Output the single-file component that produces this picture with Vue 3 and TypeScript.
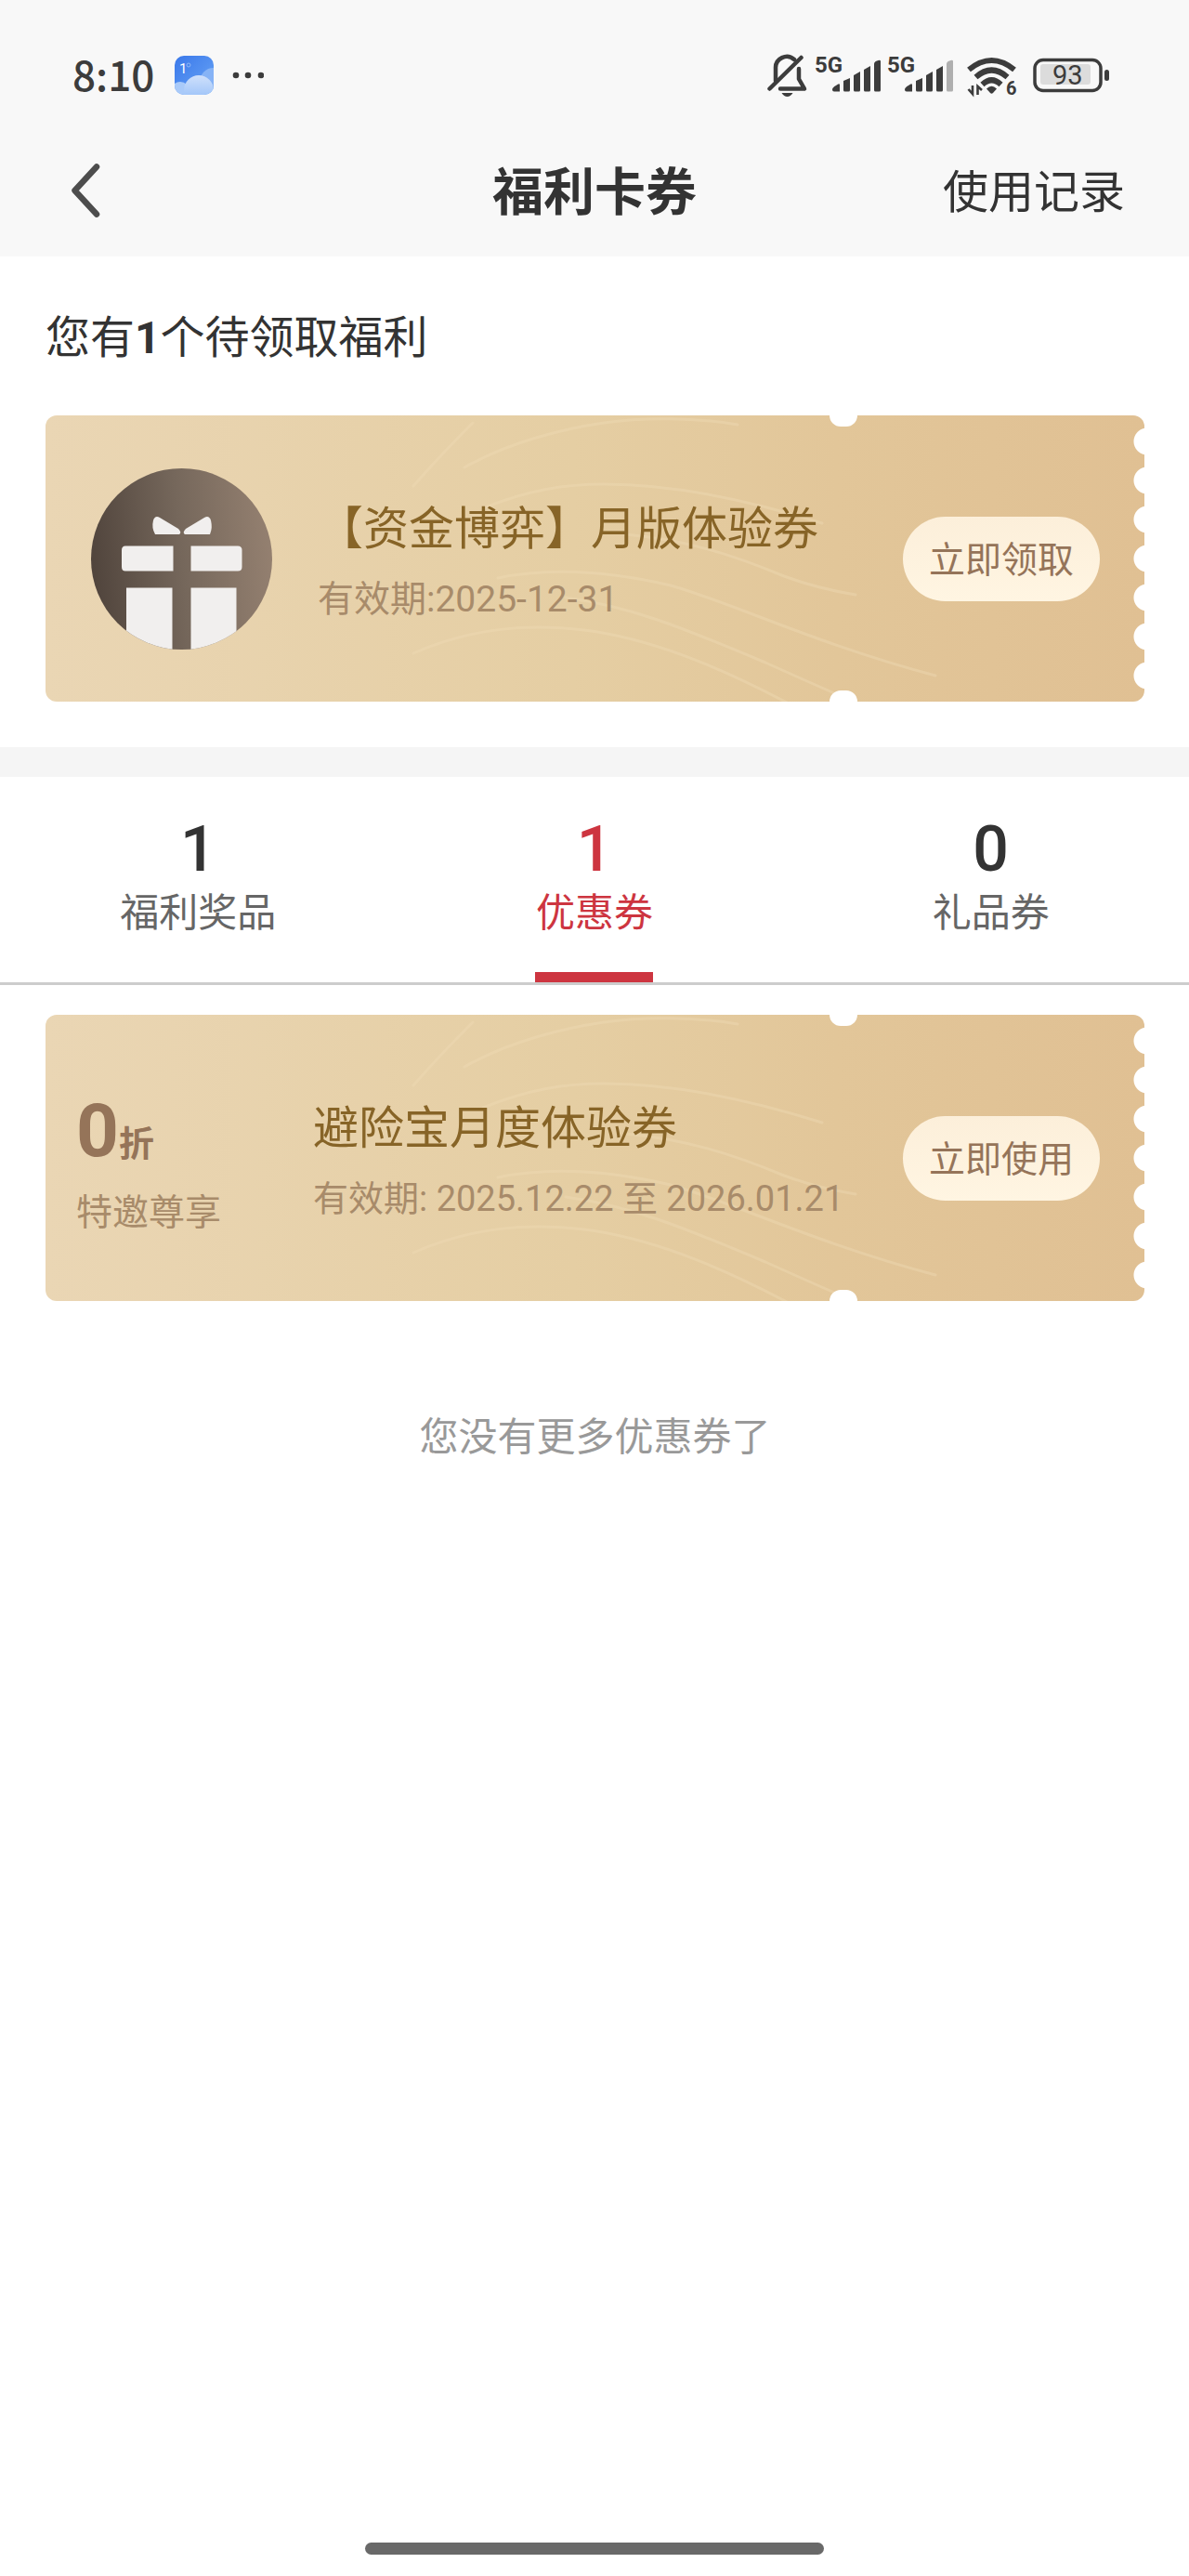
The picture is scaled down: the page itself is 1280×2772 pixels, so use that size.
<script setup lang="ts">
import { computed, ref } from 'vue'

interface Tab {
  id: string
  label: string
  count: number
}

const tabs: Tab[] = [
  { id: 'prize', label: '福利奖品', count: 1 },
  { id: 'coupon', label: '优惠券', count: 1 },
  { id: 'gift', label: '礼品券', count: 0 },
]

const active = ref('coupon')
const activeLabel = computed(() => tabs.find((t) => t.id === active.value)?.label ?? '')

const waves: string[] = [
  'M396 76Q424 44 460 8',
  'M451 56C500 28 560 14 601 8S700 2 745 10',
  'M471 100C520 80 560 74 601 74C680 74 760 92 836 116',
  'M624 128C690 134 740 150 795 173Q830 186 872 193',
  'M487 175C540 164 600 166 673 183C740 202 830 246 958 280',
  'M560 196C630 206 680 226 775 266Q815 284 856 302',
  'M396 256C460 228 520 224 580 231C650 240 720 268 800 310',
]
</script>

<template>
  <div class="page">
    <header class="top">
      <div class="status">
        <div class="status-left">
          <span class="time">8:10</span>
          <svg class="weather" viewBox="0 0 42 42" aria-hidden="true">
            <defs>
              <linearGradient id="sky" x1="0" y1="0" x2="1" y2="1">
                <stop offset="0" stop-color="#3a78ea" />
                <stop offset="1" stop-color="#6aa6f6" />
              </linearGradient>
              <linearGradient id="cloud" x1="0" y1="0" x2="0" y2="1">
                <stop offset="0" stop-color="#cfe0fb" />
                <stop offset="1" stop-color="#8dbaf8" />
              </linearGradient>
              <clipPath id="tile"><rect width="42" height="42" rx="10" /></clipPath>
            </defs>
            <g clip-path="url(#tile)">
              <rect width="42" height="42" fill="url(#sky)" />
              <circle cx="42" cy="28" r="15" fill="#86b3f6" />
              <circle cx="6" cy="38" r="10" fill="#a9caf9" />
              <circle cx="26" cy="37" r="16" fill="url(#cloud)" />
            </g>
            <text x="5" y="19" font-size="15" fill="#fff">1</text>
            <circle cx="15" cy="10" r="2" fill="none" stroke="#8fb6f5" />
          </svg>
          <svg class="dots" viewBox="0 0 34 8" fill="#3c3c3c" aria-hidden="true">
            <circle cx="4" cy="4" r="3.3" /><circle cx="17" cy="4" r="3.3" /><circle cx="31" cy="4" r="3.3" />
          </svg>
        </div>
        <svg class="signals" viewBox="0 0 370 50" aria-hidden="true">
          <g fill="none" stroke="#3c3c3c" stroke-width="4.500" stroke-linecap="round" stroke-linejoin="round">
            <path d="M9 31V17.500A12 12 0 0 1 29 8" />
            <path d="M34 18V29L40 39.500H14" />
            <path d="M2.500 39.500L36.500 6" />
          </g>
          <path d="M15.500 44H27.500Q25 48 21.500 48T15.500 44Z" fill="#3c3c3c" />
          <g fill="#3c3c3c" class="glyph">
            <text x="51" y="22" font-size="24">5G</text>
            <text x="129" y="22" font-size="24">5G</text>
            <text x="257" y="46" font-size="20">6</text>
          </g>
          <g fill="#3c3c3c">
            <path d="M70 40.500Q70 38 74 36Q78 33 78 35.500V42.500H72Q70 42.500 70 40.500Z" />
            <path d="M82 31L89 28V41Q89 42.500 87.500 42.500H83.500Q82 42.500 82 41Z" />
            <path d="M93 25L100 21V41Q100 42.500 98.500 42.500H94.500Q93 42.500 93 41Z" />
            <path d="M104 19L111 15V41Q111 42.500 109.500 42.500H105.500Q104 42.500 104 41Z" />
            <path d="M115 13Q115 10.500 118 9.500Q122 8 122 10V41Q122 42.500 120.500 42.500H116.500Q115 42.500 115 41Z" />
            <path d="M148 40.500Q148 38 152 36Q156 33 156 35.500V42.500H150Q148 42.500 148 40.500Z" />
            <path d="M160 31L167 28V41Q167 42.500 165.500 42.500H161.500Q160 42.500 160 41Z" />
            <path d="M171 25L178 21V41Q178 42.500 176.500 42.500H172.500Q171 42.500 171 41Z" />
            <path d="M182 19L189 15V41Q189 42.500 187.500 42.500H183.500Q182 42.500 182 41Z" />
          </g>
          <path d="M193 13Q193 10.500 196 9.500Q200 8 200 10V41Q200 42.500 198.500 42.500H194.500Q193 42.500 193 41Z" fill="#afafaf" />
          <g fill="none" stroke="#3c3c3c" stroke-width="6">
            <path d="M217 19Q241.500 -1 266 19" />
            <path d="M224.500 27Q241.500 12 258.500 27" />
            <path d="M231.500 35Q241.500 25.500 251.500 35" />
          </g>
          <path d="M236 39.500Q241.500 34 247 39.500L243 44Q241.500 45.500 240 44Z" fill="#3c3c3c" />
          <path d="M221 36V45L216.500 40M226.500 46V37L231 41" fill="none" stroke="#3c3c3c" stroke-width="2.600" />
          <rect x="288" y="8.500" width="71" height="33" rx="9" fill="none" stroke="#3c3c3c" stroke-width="3.500" />
          <rect x="294" y="13" width="54" height="22" rx="3" fill="#dcdcdc" />
          <rect x="363" y="19" width="5" height="12" rx="2.500" fill="#3c3c3c" />
          <text x="307" y="35" font-size="29" fill="#3c3c3c">93</text>
        </svg>
      </div>
      <nav class="nav">
        <button class="back" type="button" aria-label="返回">
          <svg viewBox="0 0 34 60" aria-hidden="true">
            <path d="M28 4.500L4.500 30L28 55.500" fill="none" stroke="#4d4d4d" stroke-width="6.500" stroke-linecap="round" stroke-linejoin="round" />
          </svg>
        </button>
        <h1 class="title">福利卡券</h1>
        <a class="history" href="#history">使用记录</a>
      </nav>
    </header>

    <section class="pending">
      <h2 class="heading">您有<b>1</b>个待领取福利</h2>
      <article class="ticket">
        <svg class="waves" viewBox="0 0 1183 308" preserveAspectRatio="xMidYMid slice" aria-hidden="true">
          <path v-for="d in waves" :key="d" :d="d" />
        </svg>
        <svg class="gift" viewBox="0 0 195 195" aria-hidden="true">
          <defs>
            <linearGradient id="disc" x1="0" y1=".55" x2="1" y2=".45">
              <stop offset="0" stop-color="#50443c" />
              <stop offset=".5" stop-color="#75675b" />
              <stop offset="1" stop-color="#948070" />
            </linearGradient>
            <clipPath id="round"><circle cx="97.500" cy="97.500" r="97.500" /></clipPath>
          </defs>
          <g clip-path="url(#round)">
            <rect width="195" height="195" fill="url(#disc)" />
            <g fill="#f1efee">
              <path d="M67 56Q69 50 74 53L94 65Q98 69 95 71H69Q65 64 67 56Z" />
              <path d="M129 56Q127 50 122 53L102 65Q98 69 101 71H128Q131 64 129 56Z" />
              <path d="M37 83.500H88.500V110.500H37Q33 110.500 33 106V88Q33 83.500 37 83.500Z" />
              <path d="M107.500 83.500H158Q162.500 83.500 162.500 88V106Q162.500 110.500 158 110.500H107.500Z" />
              <rect x="38" y="128.500" width="49.500" height="70" />
              <rect x="107.500" y="128.500" width="49" height="70" />
            </g>
          </g>
        </svg>
        <div class="info">
          <h3 class="name">【资金博弈】月版体验券</h3>
          <p class="date date-short">有效期:2025-12-31</p>
        </div>
        <button class="action" type="button">立即领取</button>
        <span class="perforation"></span>
      </article>
    </section>

    <div class="tabs" role="tablist">
      <button
        v-for="tab in tabs"
        :key="tab.id"
        type="button"
        role="tab"
        class="tab"
        :class="{ on: tab.id === active }"
        :aria-selected="tab.id === active"
        @click="active = tab.id"
      >
        <span class="count">{{ tab.count }}</span>
        <span class="label">{{ tab.label }}</span>
        <span class="bar"></span>
      </button>
    </div>

    <section class="list">
      <article v-if="active === 'coupon'" class="ticket">
        <svg class="waves" viewBox="0 0 1183 308" preserveAspectRatio="xMidYMid slice" aria-hidden="true">
          <path v-for="d in waves" :key="d" :d="d" />
        </svg>
        <div class="discount">
          <p class="rate"><strong>0</strong><b>折</b></p>
          <p class="perk">特邀尊享</p>
        </div>
        <div class="info">
          <h3 class="name">避险宝月度体验券</h3>
          <p class="date">有效期: 2025.12.22 至 2026.01.21</p>
        </div>
        <button class="action" type="button">立即使用</button>
        <span class="perforation"></span>
      </article>
      <p class="empty">您没有更多{{ activeLabel }}了</p>
    </section>

    <div class="home"></div>
  </div>
</template>

<style>
body {
  margin: 0;
  background: #fff;
}
</style>

<style scoped>
.page {
  display: flex;
  flex-direction: column;
  min-height: 100vh;
  color: #333;
  font-family: Roboto, "Noto Sans CJK SC", sans-serif;
}
h1, h2, h3, p {
  margin: 0;
  font-weight: 400;
}
button {
  padding: 0;
  border: 0;
  background: none;
  color: inherit;
  font: inherit;
  cursor: pointer;
}
.top {
  background: #f8f8f8;
}
.status {
  display: flex;
  align-items: center;
  justify-content: space-between;
  height: 106px;
  padding: 28px 84px 0 78px;
}
.status-left {
  display: flex;
  align-items: center;
}
.time {
  padding-bottom: 4px;
  font: 500 44px/56px "Noto Sans CJK SC", sans-serif;
  color: #3c3c3c;
}
.weather {
  width: 42px;
  height: 42px;
  margin: 0 20px 0 22px;
}
.dots {
  width: 34px;
  height: 8px;
}
.signals {
  width: 370px;
  height: 50px;
}
.glyph {
  font-weight: 700;
}
.nav {
  display: grid;
  grid-template-columns: 1fr auto 1fr;
  align-items: center;
  height: 142px;
  padding: 0 69px;
}
.back {
  justify-self: start;
  height: 60px;
  padding: 0 7px;
}
.back svg {
  display: block;
  width: 34px;
  height: 60px;
}
.title {
  padding-top: 4px;
  font-size: 55px;
  line-height: 72px;
  font-weight: 700;
}
.history {
  justify-self: end;
  padding-top: 6px;
  font-size: 49px;
  line-height: 64px;
  color: #333;
  text-decoration: none;
}
.pending {
  padding: 56px 48px 49px 49px;
  border-bottom: 32px solid #f5f5f5;
}
.heading {
  margin-bottom: 51px;
  font-size: 48px;
  line-height: 64px;
}
.heading b {
  font-weight: 700;
}
.ticket {
  position: relative;
  display: flex;
  align-items: center;
  height: 308px;
  padding-right: 48px;
  border-radius: 12px;
  background: linear-gradient(90deg, #ead6b4, #e5cea3 48%, #e2c699 72%, #e0c093);
}
.ticket::before,
.ticket::after {
  content: "";
  position: absolute;
  right: 309px;
  width: 30px;
  height: 12px;
  background: #fff;
}
.ticket::before {
  top: 0;
  border-radius: 0 0 15px 15px;
}
.ticket::after {
  bottom: 0;
  border-radius: 15px 15px 0 0;
}
.perforation {
  position: absolute;
  top: 7px;
  right: 0;
  bottom: 7px;
  width: 12px;
  background: radial-gradient(circle at 15px 21px, #fff 14px, transparent 15px) 0 0 / 12px 42px repeat-y;
}
.waves {
  position: absolute;
  inset: 0;
  width: 100%;
  height: 100%;
  fill: none;
  stroke: #f0dcb6;
  stroke-width: 3;
  stroke-linecap: round;
  opacity: 0.4;
}
.gift {
  position: relative;
  flex: none;
  width: 195px;
  height: 195px;
  margin: 0 49px;
}
.discount {
  position: relative;
  flex: none;
  width: 288px;
  padding: 16px 0 0 33px;
  box-sizing: border-box;
}
.rate {
  display: flex;
  align-items: baseline;
  color: #957459;
}
.rate strong {
  font-size: 80px;
  line-height: 84px;
  font-weight: 700;
}
.rate b {
  font-size: 38px;
  line-height: 38px;
  font-weight: 700;
}
.perk {
  margin-top: 18px;
  font-size: 39px;
  line-height: 56px;
  color: #a88b6a;
}
.info {
  position: relative;
  flex: 1;
  padding-top: 5px;
  white-space: nowrap;
}
.name {
  font-size: 49px;
  line-height: 70px;
  color: #876427;
}
.date {
  margin-top: 12px;
  font-size: 38px;
  line-height: 56px;
  color: #a88b6a;
}
.date-short {
  font-size: 39px;
}
.action {
  position: relative;
  flex: none;
  width: 212px;
  height: 91px;
  padding-top: 4px;
  border-radius: 46px;
  background: linear-gradient(#fcefda, #fff5e2);
  font-size: 39px;
  line-height: 56px;
  color: #957459;
}
.tabs {
  display: grid;
  grid-template-columns: repeat(3, 1fr);
  border-bottom: 3px solid #ccc;
}
.tab {
  display: flex;
  flex-direction: column;
  align-items: center;
  padding-top: 38px;
}
.count {
  font-size: 68px;
  line-height: 80px;
  font-weight: 500;
}
.label {
  font-size: 42px;
  line-height: 58px;
  color: #666;
}
.bar {
  width: 127px;
  height: 11px;
  margin-top: 34px;
}
.on,
.on .label {
  color: #cd3540;
}
.on .bar {
  background: #cd3540;
}
.list {
  padding: 32px 48px 0 49px;
}
.empty {
  margin-top: 119px;
  font-size: 42px;
  line-height: 56px;
  text-align: center;
  color: #999;
}
.home {
  width: 494px;
  height: 13px;
  margin: auto auto 23px;
  border-radius: 7px;
  background: #696969;
}
</style>
